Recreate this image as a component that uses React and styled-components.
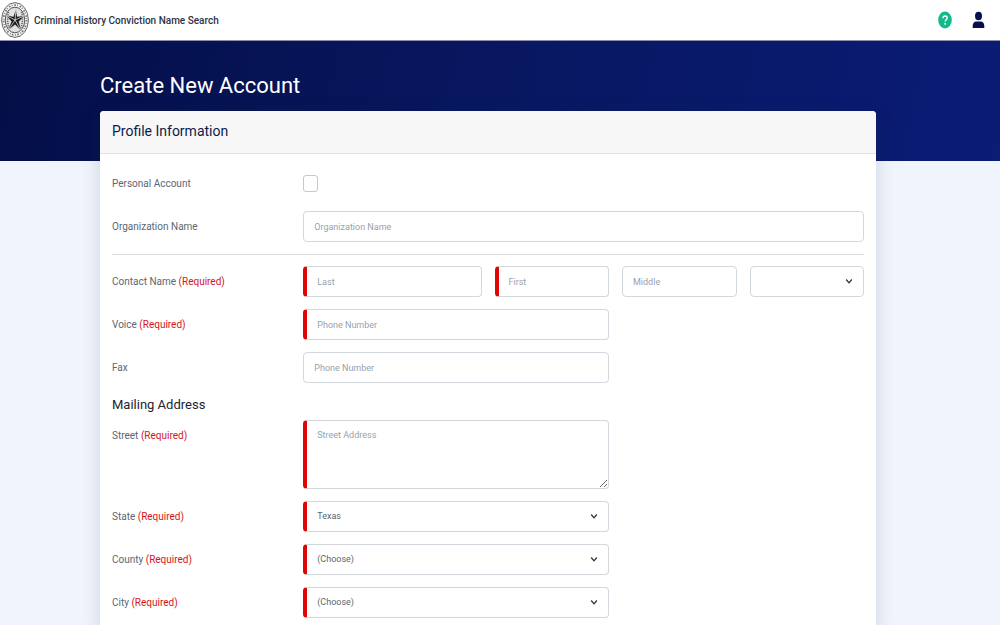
import React from "react";
import styled, { createGlobalStyle } from "styled-components";

const GlobalStyle = createGlobalStyle`
  * {
    box-sizing: border-box;
  }

  body {
    margin: 0;
    background: #f0f4fd;
    font-family: Roboto, "Liberation Sans", sans-serif;
    font-size: 10px;
    color: #5d6672;
  }
`;

const TopBar = styled.header`
  display: flex;
  align-items: center;
  height: 41px;
  padding: 0 15px 0 1px;
  background: #fff;
  border-bottom: 1px solid #8d8fb0;
`;

const Brand = styled.a`
  display: flex;
  align-items: center;
  gap: 5px;
  margin-right: auto;
  color: #2d3344;
  font-size: 10px;
  font-weight: 500;
  text-decoration: none;
`;

const IconButton = styled.button`
  display: flex;
  margin-left: 20px;
  padding: 0;
  border: 0;
  background: none;
  cursor: pointer;
`;

const Hero = styled.section`
  height: 120px;
  padding: 30px 124px 0 100px;
  background: linear-gradient(100deg, #040f48 0%, #081760 50%, #0a1c76 100%);
`;

const PageTitle = styled.h1`
  margin: 0;
  color: #fff;
  font-size: 22px;
  font-weight: 400;
  line-height: 30px;
`;

const Main = styled.main`
  margin-top: -50px;
  padding: 0 124px 0 100px;
`;

const Card = styled.form`
  overflow: hidden;
  background: #fff;
  border-radius: 4px 4px 0 0;
  box-shadow: 0 4px 20px rgba(40, 50, 70, 0.16);
`;

const CardHeader = styled.div`
  padding: 9px 12px 11px;
  background: #f7f7f7;
  border-bottom: 1px solid #dfe1e5;
`;

const CardTitle = styled.h2`
  margin: 0;
  color: #0b1a4e;
  font-size: 14px;
  font-weight: 400;
  line-height: 22px;
`;

const CardBody = styled.div`
  padding: 14px 12px 12px;
`;

const Group = styled.div`
  display: grid;
  gap: 12px;
`;

const Row = styled.div`
  display: grid;
  grid-template-columns: repeat(12, 1fr);
  column-gap: 13px;
  align-items: start;
`;

const Label = styled.label`
  grid-column: span 3;
  padding-top: 1px;
  line-height: 30px;
`;

const Required = styled.span`
  color: #d3141b;
`;

const Divider = styled.hr`
  height: 1px;
  margin: 12px 0 11px;
  border: 0;
  background: #dcdee3;
`;

const SectionTitle = styled.h3`
  margin: 12px 0 5px;
  color: #1d2430;
  font-size: 13px;
  font-weight: 400;
  line-height: 20px;
`;

const Cell = styled.div`
  position: relative;
  display: flex;
  grid-column: span ${({ $span }) => $span};
`;

const controlStyles = `
  width: 100%;
  border: 1px solid #d3d7de;
  border-radius: 4px;
  background: #fff;
  color: #5d6672;
  font-family: inherit;
  font-size: 9px;
`;

const Input = styled.input`
  ${controlStyles}
  height: 31px;
  padding: 0 10px;
  ${({ required }) => required && "border-left: 4px solid #e00505;"}

  &::placeholder {
    color: #98a1ad;
  }
`;

const TextArea = styled.textarea`
  ${controlStyles}
  height: 69px;
  padding: 9px 10px;
  border-left: 4px solid #e00505;
  resize: vertical;

  &::placeholder {
    color: #98a1ad;
  }
`;

const Select = styled.select`
  ${controlStyles}
  height: 31px;
  padding: 0 26px 2px 10px;
  appearance: none;
  ${({ required }) => required && "border-left: 4px solid #e00505;"}
`;

const Chevron = styled.svg`
  position: absolute;
  top: 12px;
  right: 11px;
  pointer-events: none;
`;

const CheckBox = styled.input`
  width: 15px;
  height: 17px;
  margin: 7px 0;
  border: 1px solid #c5c8cd;
  border-radius: 3px;
  background: #fff;
  appearance: none;

  &:checked {
    background: #0a1c76;
  }
`;

function Seal() {
  return (
    <svg width="28" height="36" viewBox="0 0 28 36" aria-hidden="true">
      <ellipse cx="14" cy="18" rx="13.4" ry="17.400" fill="#f4f4f4" stroke="#555" strokeWidth="0.9" />
      <ellipse cx="14" cy="18" rx="11.500" ry="15" fill="none" stroke="#777" strokeWidth="1.800" strokeDasharray="1.600 1.300 0.800 1.900" />
      <ellipse cx="14" cy="18" rx="9.800" ry="12.800" fill="#e2e2e2" stroke="#444" strokeWidth="0.9" />
      <path d="M7.500 10Q5.500 18 8 26M20.500 10Q22.500 18 20 26" fill="none" stroke="#666" strokeWidth="1.600" strokeDasharray="1.200 1" />
      <path
        d="M15 6.500L16.300 14.500L24 13.500L18 19.500L20.500 29L14 22.800L6.500 29L10.300 19.500L4.800 13L12.300 14.500Z"
        fill="#191919"
        stroke="#eee"
        strokeWidth="0.5"
      />
      <path d="M15 7.500L14 18L22.800 14M14 18L19.500 27.500M14 18L7.800 27.500M14 18L6 13.800" fill="none" stroke="#fff" strokeWidth="0.7" />
    </svg>
  );
}

function SelectField({ id, span, required, options, label }) {
  return (
    <Cell $span={span}>
      <Select id={id} required={required} aria-label={label}>
        {options.map((option) => (
          <option key={option}>{option}</option>
        ))}
      </Select>
      <Chevron width="8" height="7" viewBox="0 0 8 7" aria-hidden="true">
        <path d="M1.200 1.500L4 4.800L6.800 1.500" fill="none" stroke="#2b3038" strokeWidth="1.300" />
      </Chevron>
    </Cell>
  );
}

function FieldRow({ id, label, required, children }) {
  return (
    <Row>
      <Label htmlFor={id}>
        {label} {required && <Required>(Required)</Required>}
      </Label>
      {children}
    </Row>
  );
}

export default function App() {
  return (
    <>
      <GlobalStyle />
      <TopBar>
        <Brand href="#">
          <Seal />
          Criminal History Conviction Name Search
        </Brand>
        <IconButton type="button" aria-label="Help">
          <svg width="14" height="18" viewBox="0 0 14 18">
            <ellipse cx="7" cy="9" rx="6.800" ry="8.500" fill="#12b98c" />
            <path d="M5 7.200C5 4.200 9.200 4.400 9.200 7C9.200 8.700 7.100 8.800 7.100 10.500" fill="none" stroke="#fff" strokeWidth="1.400" />
            <ellipse cx="7.100" cy="12.800" rx="0.900" ry="1.100" fill="#fff" />
          </svg>
        </IconButton>
        <IconButton type="button" aria-label="Account">
          <svg width="13" height="18" viewBox="0 0 13 18">
            <ellipse cx="6.500" cy="5" rx="3.500" ry="4.300" fill="#06104f" />
            <path d="M0.700 17V15C0.700 12.200 2.300 10.600 4.200 10.600H8.800C10.700 10.600 12.300 12.200 12.300 15V17Z" fill="#06104f" />
          </svg>
        </IconButton>
      </TopBar>
      <Hero>
        <PageTitle>Create New Account</PageTitle>
      </Hero>
      <Main>
        <Card>
          <CardHeader>
            <CardTitle>Profile Information</CardTitle>
          </CardHeader>
          <CardBody>
            <Group>
              <FieldRow id="personal" label="Personal Account">
                <Cell $span={9}>
                  <CheckBox id="personal" type="checkbox" />
                </Cell>
              </FieldRow>
              <FieldRow id="organization" label="Organization Name">
                <Cell $span={9}>
                  <Input id="organization" placeholder="Organization Name" />
                </Cell>
              </FieldRow>
            </Group>
            <Divider />
            <Group>
              <FieldRow id="last" label="Contact Name" required>
                <Cell $span={3}>
                  <Input id="last" placeholder="Last" required />
                </Cell>
                <Cell $span={2}>
                  <Input aria-label="First" placeholder="First" required />
                </Cell>
                <Cell $span={2}>
                  <Input aria-label="Middle" placeholder="Middle" />
                </Cell>
                <SelectField span={2} label="Suffix" options={[""]} />
              </FieldRow>
              <FieldRow id="voice" label="Voice" required>
                <Cell $span={5}>
                  <Input id="voice" type="tel" placeholder="Phone Number" required />
                </Cell>
              </FieldRow>
              <FieldRow id="fax" label="Fax">
                <Cell $span={5}>
                  <Input id="fax" type="tel" placeholder="Phone Number" />
                </Cell>
              </FieldRow>
            </Group>
            <SectionTitle>Mailing Address</SectionTitle>
            <Group>
              <FieldRow id="street" label="Street" required>
                <Cell $span={5}>
                  <TextArea id="street" placeholder="Street Address" required />
                </Cell>
              </FieldRow>
              <FieldRow id="state" label="State" required>
                <SelectField id="state" span={5} options={["Texas"]} required />
              </FieldRow>
              <FieldRow id="county" label="County" required>
                <SelectField id="county" span={5} options={["(Choose)"]} required />
              </FieldRow>
              <FieldRow id="city" label="City" required>
                <SelectField id="city" span={5} options={["(Choose)"]} required />
              </FieldRow>
            </Group>
          </CardBody>
        </Card>
      </Main>
    </>
  );
}
